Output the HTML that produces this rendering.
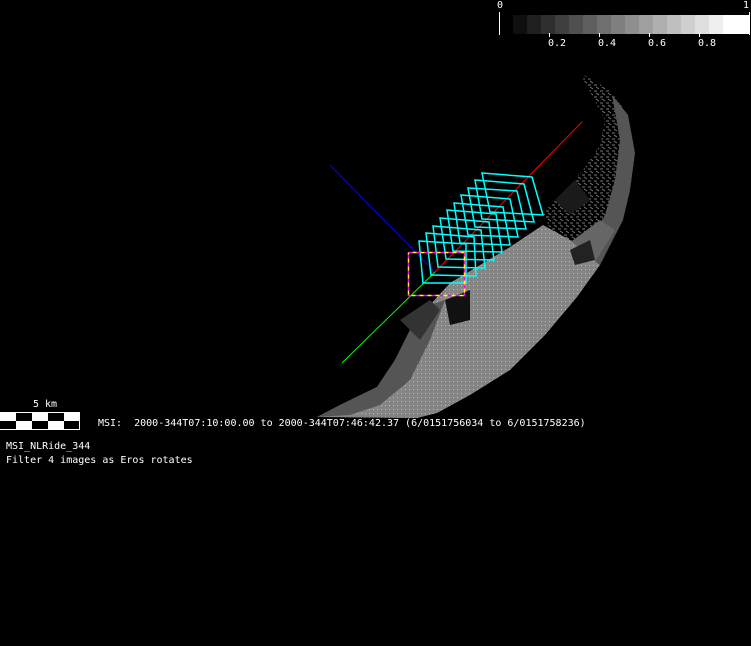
<!DOCTYPE html>
<html><head><style>
html,body{margin:0;padding:0;background:#000;width:751px;height:646px;overflow:hidden}
body{position:relative;font-family:"DejaVu Sans Mono","Liberation Mono",monospace;color:#fff;font-size:10px}
.t{position:absolute;white-space:pre;line-height:12px}
</style></head><body>
<svg width="751" height="646" style="position:absolute;left:0;top:0">
<defs>
<pattern id="sp" width="6" height="6" patternUnits="userSpaceOnUse">
<rect width="6" height="6" fill="#000"/>
<path d="M0,1 L3,1 M2,3 L5,5" stroke="#777" stroke-width="1"/>
</pattern>
<pattern id="dn" width="4" height="4" patternUnits="userSpaceOnUse">
<rect width="4" height="4" fill="#858585"/>
<rect x="1" y="1" width="1" height="1" fill="#bbb"/>
</pattern>
</defs>
<!-- colorbar -->
<line x1="499.5" y1="12" x2="499.5" y2="35" stroke="#fff"/>
<line x1="749.5" y1="12" x2="749.5" y2="35" stroke="#fff"/>
<g>
<rect x="513" y="15" width="14" height="19" fill="#0f0f0f"/>
<rect x="527" y="15" width="14" height="19" fill="#1f1f1f"/>
<rect x="541" y="15" width="14" height="19" fill="#2f2f2f"/>
<rect x="555" y="15" width="14" height="19" fill="#3f3f3f"/>
<rect x="569" y="15" width="14" height="19" fill="#4f4f4f"/>
<rect x="583" y="15" width="14" height="19" fill="#5f5f5f"/>
<rect x="597" y="15" width="14" height="19" fill="#6f6f6f"/>
<rect x="611" y="15" width="14" height="19" fill="#7f7f7f"/>
<rect x="625" y="15" width="14" height="19" fill="#8f8f8f"/>
<rect x="639" y="15" width="14" height="19" fill="#9f9f9f"/>
<rect x="653" y="15" width="14" height="19" fill="#afafaf"/>
<rect x="667" y="15" width="14" height="19" fill="#bfbfbf"/>
<rect x="681" y="15" width="14" height="19" fill="#cfcfcf"/>
<rect x="695" y="15" width="14" height="19" fill="#dfdfdf"/>
<rect x="709" y="15" width="14" height="19" fill="#efefef"/>
<rect x="723" y="15" width="26" height="19" fill="#fff"/>
</g>
<g stroke="#fff"><line x1="549.5" y1="33" x2="549.5" y2="37"/><line x1="599.5" y1="33" x2="599.5" y2="37"/><line x1="649.5" y1="33" x2="649.5" y2="37"/><line x1="699.5" y1="33" x2="699.5" y2="37"/></g>
<!-- asteroid: sparse upper arc -->
<path d="M580,73 L610,90 L628,115 L635,153 L630,190 L623,220 L600,265 L560,250 L543,213 L565,190 L583,170 L600,145 L605,120 Z" fill="url(#sp)"/>
<path d="M612,95 L628,115 L635,153 L630,190 L623,220 L600,265 L585,250 L605,215 L615,180 L620,140 Z" fill="#555"/>
<path d="M560,250 L600,220 L615,230 L590,270 Z" fill="#666"/>
<!-- dense lower part -->
<path d="M600,265 L577,297 L545,335 L510,370 L470,395 L437,413 L417,418 L317,417 L340,405 L377,387 L395,360 L410,330 L430,305 L450,283 L480,265 L510,247 L543,225 L570,240 Z" fill="url(#dn)"/>
<path d="M317,417 L340,405 L377,387 L395,360 L410,330 L430,305 L445,300 L430,340 L410,380 L380,405 L350,415 Z" fill="#555"/>
<path d="M400,320 L430,300 L440,310 L420,340 Z" fill="#333"/>
<path d="M445,300 L470,290 L470,320 L450,325 Z" fill="#111"/>
<path d="M555,200 L575,180 L590,200 L570,215 Z" fill="#1a1a1a"/>
<path d="M570,250 L590,240 L595,260 L575,265 Z" fill="#222"/>
<!-- axes -->
<line x1="330" y1="165" x2="435" y2="272" stroke="#0000ff"/>
<line x1="435" y1="272" x2="582" y2="122" stroke="#ff0000"/>
<line x1="435" y1="272" x2="342" y2="363" stroke="#00ff00"/>
<!-- cyan footprints -->
<g fill="none" stroke="#00ffff" stroke-width="1.5">
<path d="M419,241 L466,244 L466,283 L423,283 Z"/>
<path d="M426,233 L474,237 L476,276 L431,275 Z"/>
<path d="M433,226 L481,230 L485,268 L438,267 Z"/>
<path d="M440,218 L489,222 L494,260 L446,259 Z"/>
<path d="M447,210 L496,214 L502,252 L453,251 Z"/>
<path d="M454,203 L503,207 L510,245 L460,243 Z"/>
<path d="M461,195 L510,199 L518,237 L468,235 Z"/>
<path d="M468,188 L517,191 L526,229 L475,227 Z"/>
<path d="M475,180 L524,184 L534,222 L482,219 Z"/>
<path d="M482,173 L532,177 L543,215 L490,212 Z"/>
</g>
<rect x="408.5" y="252.5" width="56" height="43" fill="none" stroke="#ff00ff" stroke-width="1.5" stroke-dasharray="4,4"/>
<rect x="408.5" y="252.5" width="56" height="43" fill="none" stroke="#ffff00" stroke-width="1.5" stroke-dasharray="4,4" stroke-dashoffset="4"/>
<!-- scale bar -->
<rect x="0.5" y="412.5" width="79" height="17" fill="#fff" stroke="#fff"/>
<rect x="16" y="413" width="16" height="8" fill="#000"/>
<rect x="48" y="413" width="16" height="8" fill="#000"/>
<rect x="0" y="421" width="16" height="8" fill="#000"/>
<rect x="32" y="421" width="16" height="8" fill="#000"/>
<rect x="64" y="421" width="15" height="8" fill="#000"/>
</svg>
<div class="t" style="left:497px;top:0px">0</div>
<div class="t" style="left:743px;top:0px">1</div>
<div class="t" style="left:548px;top:38px">0.2</div>
<div class="t" style="left:598px;top:38px">0.4</div>
<div class="t" style="left:648px;top:38px">0.6</div>
<div class="t" style="left:698px;top:38px">0.8</div>
<div class="t" style="left:33px;top:399px">5 km</div>
<div class="t" style="left:98px;top:418px">MSI:  2000-344T07:10:00.00 to 2000-344T07:46:42.37 (6/0151756034 to 6/0151758236)</div>
<div class="t" style="left:6px;top:441px">MSI_NLRide_344</div>
<div class="t" style="left:6px;top:455px">Filter 4 images as Eros rotates</div>
</body></html>
